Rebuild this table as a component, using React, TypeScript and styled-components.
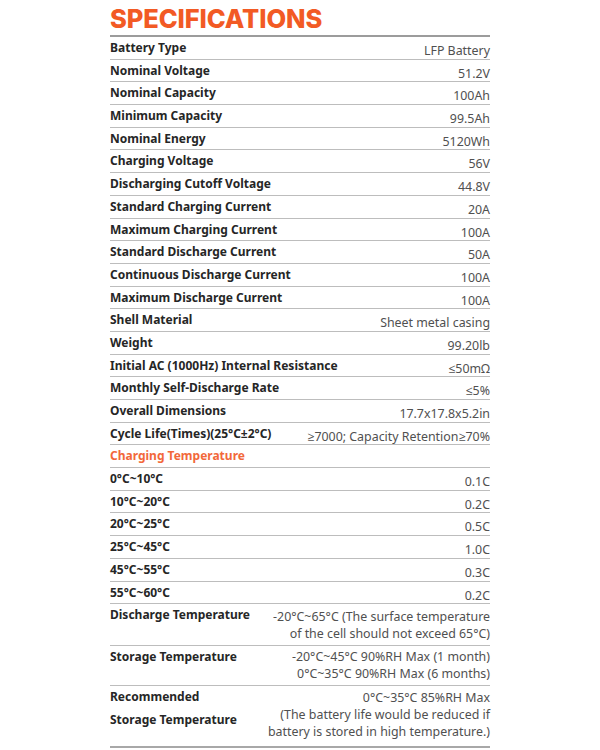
import React from "react";
import styled, { createGlobalStyle } from "styled-components";

const Global = createGlobalStyle`
  html, body { margin: 0; padding: 0; background: #ffffff; }
  body { font-family: "Noto Sans", "Open Sans", sans-serif; }
`;

const Sheet = styled.div`
  width: 380px;
  margin: 0 auto;
  display: flex;
  flex-direction: column;
`;

const Title = styled.h1`
  margin: 0;
  padding-top: 4px;
  height: 31px;
  font-family: Inter, "Noto Sans", sans-serif;
  font-weight: 800;
  font-size: 25.5px;
  line-height: 30px;
  letter-spacing: -0.1px;
  color: #f25a24;
  border-bottom: 2px solid #9c9c9c;
`;

const Row = styled.div<{ $h?: number; $last?: boolean }>`
  display: flex;
  justify-content: space-between;
  align-items: flex-start;
  box-sizing: border-box;
  height: ${(p) => p.$h ?? 22.7}px;
  border-bottom: ${(p) => (p.$last ? "2px solid #a8a8a8" : "1px solid #bdbdbd")};
`;

const Label = styled.div<{ $accent?: boolean }>`
  display: flex;
  flex-direction: column;
  padding-top: 3px;
  font-weight: 700;
  font-size: 12px;
  line-height: 16px;
  color: ${(p) => (p.$accent ? "#f2683a" : "#262626")};
  white-space: nowrap;
`;

const LabelLine = styled.span<{ $gap?: number }>`
  display: block;
  margin-top: ${(p) => p.$gap ?? 0}px;
`;

const Value = styled.div<{ $top?: number }>`
  display: flex;
  flex-direction: column;
  align-items: flex-end;
  padding-top: ${(p) => p.$top ?? 5}px;
  font-weight: 400;
  font-size: 12.4px;
  line-height: 18.8px;
  color: #505050;
  text-align: right;
  white-space: nowrap;
`;

const ValueLine = styled.span`
  display: block;
  line-height: 18.8px;
  height: 18.8px;
  margin-top: -2px;
  &:first-child { margin-top: 0; }
`;

type Spec = [string, string];

const specs: Spec[] = [
  ["Battery Type", "LFP Battery"],
  ["Nominal Voltage", "51.2V"],
  ["Nominal Capacity", "100Ah"],
  ["Minimum Capacity", "99.5Ah"],
  ["Nominal Energy", "5120Wh"],
  ["Charging Voltage", "56V"],
  ["Discharging Cutoff Voltage", "44.8V"],
  ["Standard Charging Current", "20A"],
  ["Maximum Charging Current", "100A"],
  ["Standard Discharge Current", "50A"],
  ["Continuous Discharge Current", "100A"],
  ["Maximum Discharge Current", "100A"],
  ["Shell Material", "Sheet metal casing"],
  ["Weight", "99.20lb"],
  ["Initial AC (1000Hz) Internal Resistance", "≤50mΩ"],
  ["Monthly Self-Discharge Rate", "≤5%"],
  ["Overall Dimensions", "17.7x17.8x5.2in"],
  ["Cycle Life(Times)(25°C±2°C)", "≥7000; Capacity Retention≥70%"],
];

const charging: Spec[] = [
  ["0°C~10°C", "0.1C"],
  ["10°C~20°C", "0.2C"],
  ["20°C~25°C", "0.5C"],
  ["25°C~45°C", "1.0C"],
  ["45°C~55°C", "0.3C"],
  ["55°C~60°C", "0.2C"],
];

export default function App() {
  return (
    <>
      <Global />
      <Sheet>
        <Title>SPECIFICATIONS</Title>
        {specs.map(([k, v]) => (
          <Row key={k}>
            <Label>{k}</Label>
            <Value>{v}</Value>
          </Row>
        ))}
        <Row>
          <Label $accent>Charging Temperature</Label>
        </Row>
        {charging.map(([k, v]) => (
          <Row key={k}>
            <Label>{k}</Label>
            <Value>{v}</Value>
          </Row>
        ))}
        <Row $h={42}>
          <Label>Discharge Temperature</Label>
          <Value $top={4}>
            <ValueLine>-20°C~65°C (The surface temperature</ValueLine>
            <ValueLine>of the cell should not exceed 65°C)</ValueLine>
          </Value>
        </Row>
        <Row $h={40}>
          <Label>Storage Temperature</Label>
          <Value $top={2}>
            <ValueLine>-20°C~45°C 90%RH Max (1 month)</ValueLine>
            <ValueLine>0°C~35°C 90%RH Max (6 months)</ValueLine>
          </Value>
        </Row>
        <Row $h={62} $last>
          <Label>
            <LabelLine>Recommended</LabelLine>
            <LabelLine $gap={7}>Storage Temperature</LabelLine>
          </Label>
          <Value $top={3}>
            <ValueLine>0°C~35°C 85%RH Max</ValueLine>
            <ValueLine>(The battery life would be reduced if</ValueLine>
            <ValueLine>battery is stored in high temperature.)</ValueLine>
          </Value>
        </Row>
      </Sheet>
    </>
  );
}
